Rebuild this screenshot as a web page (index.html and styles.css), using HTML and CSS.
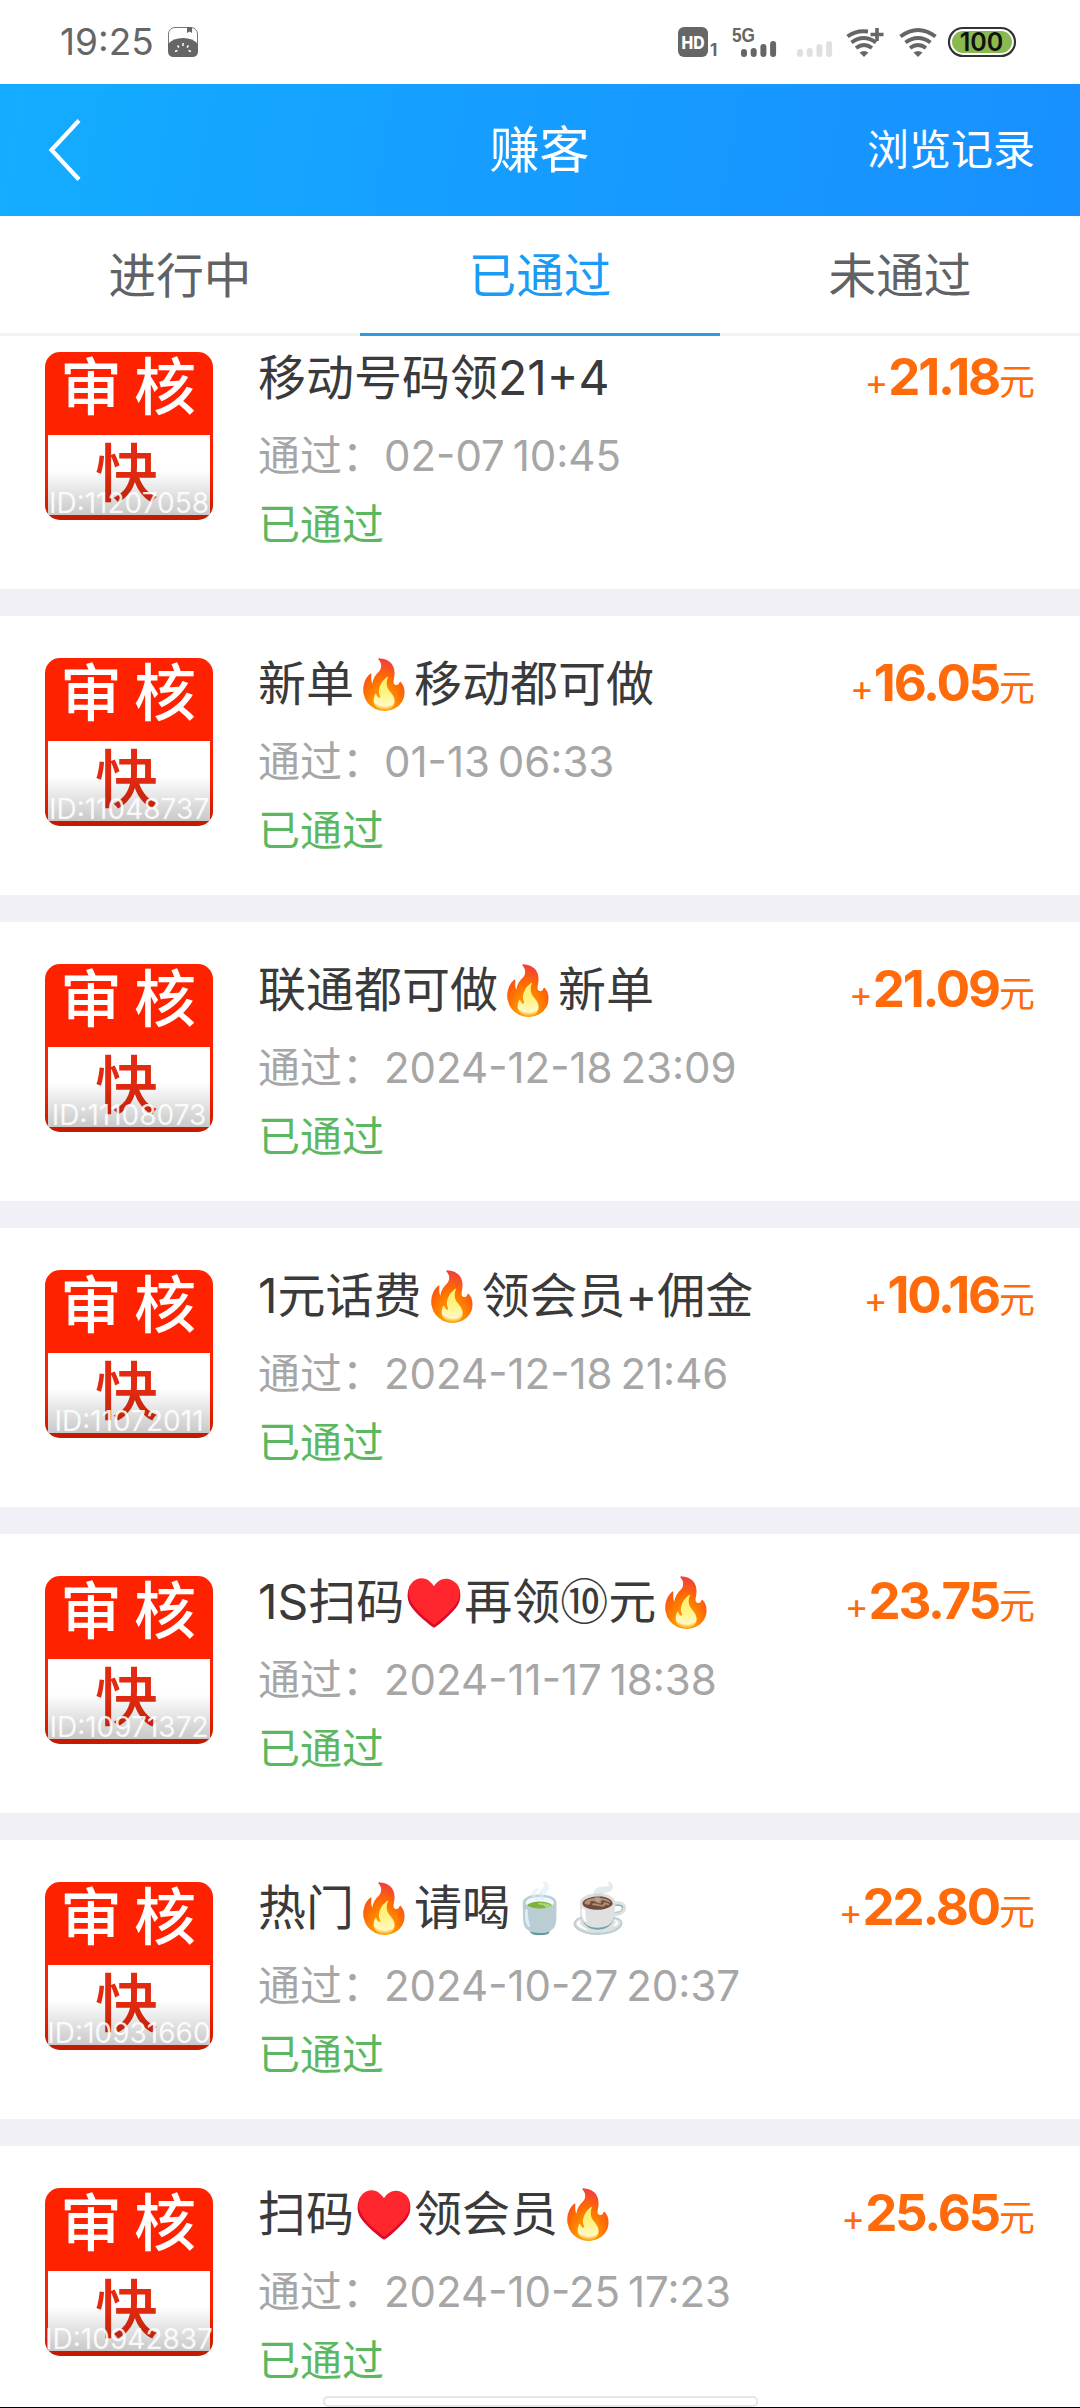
FILE: index.html
```html
<!DOCTYPE html>
<html lang="zh-CN">
<head>
<meta charset="utf-8">
<title>赚客</title>
<link rel="stylesheet" href="styles.css">
</head>
<body>
<div class="screen">
  <div class="status">
    <span class="clock">19:25</span>
    <svg class="app-icon" width="30" height="30" viewBox="0 0 30 30">
      <rect x=".5" y=".5" width="29" height="29" rx="6.5" fill="#fff" stroke="#777"/>
      <path d="M0 17Q5 11 15 11T30 17V24Q30 30 24 30H6Q0 30 0 24Z" fill="#666"/>
      <path d="M19 0h5v6l-2.500-1.500L19 6Z" fill="#666"/>
      <path d="M15 16v3M9.500 18.500l1.500 2M20.500 18.500l-1.500 2M7 24.500l2.500-1M23 24.500l-2.500-1" stroke="#fff" stroke-width="1.500"/>
    </svg>
    <div class="signals">
      <svg width="40" height="30" viewBox="0 0 40 30">
        <rect width="30" height="30" rx="6" fill="#666"/>
        <text x="15" y="21.500" text-anchor="middle" textLength="23" lengthAdjust="spacingAndGlyphs" class="hd">HD</text>
        <text x="32" y="29" class="sim">1</text>
      </svg>
      <svg class="cell" width="45" height="30" viewBox="0 0 45 30">
        <text x="0" y="14.500" textLength="23" lengthAdjust="spacingAndGlyphs" class="net">5G</text>
        <path d="M12 25v2M21.700 24v3M31.400 20v7M41.100 17v10" stroke="#666" stroke-width="6" stroke-linecap="round"/>
      </svg>
      <svg class="cell-off" width="36" height="30" viewBox="0 0 36 30">
        <path d="M3 25v2M12.700 24v3M22.400 20v7M32.100 17v10" stroke="#e0e0e0" stroke-width="6" stroke-linecap="round"/>
      </svg>
      <svg class="wifi-plus" width="38" height="30" viewBox="0 0 38 30">
        <g fill="none" stroke="#666" stroke-width="4">
          <path d="M1.500 9.500Q10 3 22 4.500M5.500 15.500Q17.500 6.500 30 15.500M10 21Q18 15 26 21"/>
          <path d="M31 1v13M24.500 7.500h13" stroke-width="3.600"/>
        </g>
        <path d="M13.500 25.500Q18 22.500 22.500 25.500L18 30Z" fill="#666"/>
      </svg>
      <svg class="wifi" width="38" height="30" viewBox="0 0 38 30">
        <path d="M1.500 9.500Q19 -3.500 36.500 9.500M6.500 15.500Q19 6.500 31.500 15.500M11 21Q19 15 27 21" fill="none" stroke="#666" stroke-width="4"/>
        <path d="M14.500 25.500Q19 22.500 23.500 25.500L19 30Z" fill="#666"/>
      </svg>
      <svg class="battery" width="68" height="30" viewBox="0 0 68 30">
        <rect x="1" y="1" width="66" height="28" rx="14" fill="#fff" stroke="#333" stroke-width="2.200"/>
        <rect x="4" y="4" width="60" height="22" rx="11" fill="#8aba4f"/>
        <text x="33.500" y="24" text-anchor="middle" class="level">100</text>
      </svg>
    </div>
  </div>

  <header class="bar">
    <svg class="back" width="32" height="64" viewBox="0 0 32 64"><path d="M30 2.500 2.500 32 30 61.500" fill="none" stroke="#fff" stroke-width="4.200"/></svg>
    <h1>赚客</h1>
    <a class="history">浏览记录</a>
  </header>

  <nav class="tabs">
    <a class="tab">进行中</a>
    <a class="tab active">已通过</a>
    <a class="tab">未通过</a>
  </nav>

  <main class="list">
    <article class="card">
      <div class="thumb"><div class="top">审核</div><div class="bottom">快</div><span class="id">ID:11207058</span></div>
      <div class="info"><h2>移动号码领21+4</h2><p class="time">通过：02-07 10:45</p><p class="state">已通过</p></div>
      <div class="price">+<b>21.18</b>元</div>
    </article>
    <article class="card">
      <div class="thumb"><div class="top">审核</div><div class="bottom">快</div><span class="id">ID:11048737</span></div>
      <div class="info"><h2>新单🔥移动都可做</h2><p class="time">通过：01-13 06:33</p><p class="state">已通过</p></div>
      <div class="price">+<b>16.05</b>元</div>
    </article>
    <article class="card">
      <div class="thumb"><div class="top">审核</div><div class="bottom">快</div><span class="id">ID:11108073</span></div>
      <div class="info"><h2>联通都可做🔥新单</h2><p class="time">通过：2024-12-18 23:09</p><p class="state">已通过</p></div>
      <div class="price">+<b>21.09</b>元</div>
    </article>
    <article class="card">
      <div class="thumb"><div class="top">审核</div><div class="bottom">快</div><span class="id">ID:11072011</span></div>
      <div class="info"><h2>1元话费🔥领会员+佣金</h2><p class="time">通过：2024-12-18 21:46</p><p class="state">已通过</p></div>
      <div class="price">+<b>10.16</b>元</div>
    </article>
    <article class="card">
      <div class="thumb"><div class="top">审核</div><div class="bottom">快</div><span class="id">ID:10971372</span></div>
      <div class="info"><h2>1S扫码♥️再领⑩元🔥</h2><p class="time">通过：2024-11-17 18:38</p><p class="state">已通过</p></div>
      <div class="price">+<b>23.75</b>元</div>
    </article>
    <article class="card">
      <div class="thumb"><div class="top">审核</div><div class="bottom">快</div><span class="id">ID:10931660</span></div>
      <div class="info"><h2>热门🔥请喝🍵☕</h2><p class="time">通过：2024-10-27 20:37</p><p class="state">已通过</p></div>
      <div class="price">+<b>22.80</b>元</div>
    </article>
    <article class="card">
      <div class="thumb"><div class="top">审核</div><div class="bottom">快</div><span class="id">ID:10942837</span></div>
      <div class="info"><h2>扫码♥️领会员🔥</h2><p class="time">通过：2024-10-25 17:23</p><p class="state">已通过</p></div>
      <div class="price">+<b>25.65</b>元</div>
    </article>
  </main>
  <div class="home-handle"></div>
</div>
</body>
</html>
```
FILE: styles.css
```css
* { box-sizing: border-box; }
body { margin: 0; font-family: Inter, "Noto Sans CJK SC", sans-serif; }
h1, h2, p { margin: 0; font-weight: 400; }
svg { display: block; flex: none; overflow: visible; }

.screen {
  position: relative;
  display: flex;
  flex-direction: column;
  width: 1080px;
  height: 2408px;
  overflow: hidden;
  background: #fff;
  border-bottom: 1px solid #000;
}

.status {
  flex: none;
  display: flex;
  align-items: center;
  height: 84px;
  padding: 0 64px 0 60px;
}
.clock { width: 108px; font-size: 37px; line-height: 84px; color: #666; }
.signals { display: flex; margin-left: auto; }
.cell { margin-left: 14px; }
.cell-off { margin-left: 20px; }
.wifi-plus { margin-left: 13px; }
.wifi { margin-left: 15px; }
.battery { margin-left: 11px; }
.hd { font: 800 17px Inter, sans-serif; fill: #fff; }
.sim { font: 700 17px Inter, sans-serif; fill: #666; }
.net { font: 700 20px "Liberation Sans", sans-serif; fill: #666; }
.level { font: 600 25px Inter, sans-serif; fill: #111; }

.bar {
  flex: none;
  display: grid;
  grid-template-columns: 1fr auto 1fr;
  align-items: center;
  height: 132px;
  padding: 0 45px 0 49px;
  background: linear-gradient(100deg, #13adff, #169cff 50%, #1890ff);
  color: #fff;
}
.bar h1 { font-size: 50px; line-height: 132px; margin-right: 5px; }
.history { justify-self: end; font-size: 42px; line-height: 132px; }

.tabs { flex: none; display: flex; height: 120px; }
.tab {
  flex: 1;
  border-bottom: 3px solid #f2f2f3;
  text-align: center;
  font-size: 47.6px;
  line-height: 120px;
  color: #606266;
}
.tab.active { border-color: #2c9ddf; color: #1b9bf5; }

.list {
  flex: 1;
  min-height: 0;
  display: flex;
  flex-direction: column;
  gap: 27px;
  margin-top: -26px;
  overflow: hidden;
  background: #f0f0f6;
  clip-path: inset(26px 0 0 0);
}
.card {
  flex: none;
  display: flex;
  height: 279px;
  padding: 42px 45px 0;
  background: #fff;
}

.thumb {
  position: relative;
  flex: none;
  width: 168px;
  height: 168px;
  border-radius: 15px;
  overflow: hidden;
  background: #ff2200;
  padding: 0 3px 5px;
}
.thumb .top {
  height: 83px;
  padding-left: 12px;
  font-size: 62px;
  font-weight: 500;
  line-height: 72px;
  letter-spacing: 12px;
  white-space: nowrap;
  color: #fff;
}
.thumb .bottom {
  height: 80px;
  padding-right: 5px;
  background: #fff;
  text-align: center;
  font-size: 63px;
  font-weight: 500;
  line-height: 76px;
  color: #e32a10;
}
.thumb .id {
  position: absolute;
  inset: auto 0 0;
  height: 50px;
  padding-top: 17px;
  background: linear-gradient(rgba(0, 0, 0, 0), rgba(0, 0, 0, .24));
  text-align: center;
  font-size: 28px;
  line-height: 33px;
  color: rgba(255, 255, 255, .88);
}

.info { flex: 1; margin-left: 45px; }
.info h2 { height: 50px; font-size: 48px; line-height: 51px; white-space: nowrap; color: #3a3a3a; }
.time { margin-top: 29px; font-size: 42px; line-height: 50px; word-spacing: -4px; white-space: nowrap; color: #a6a6a6; }
.state { margin-top: 19px; font-size: 42px; line-height: 50px; color: #5cb860; }

.price {
  height: 50px;
  font-size: 36px;
  line-height: 49px;
  white-space: nowrap;
  color: #ff6a0b;
}
.price b { font-size: 51px; font-weight: 650; letter-spacing: -2.2px; }

.home-handle {
  position: absolute;
  left: 323px;
  bottom: 0;
  width: 435px;
  height: 11px;
  border: 2px solid #e6e6e6;
  border-radius: 5px;
  background: #fff;
}
```
